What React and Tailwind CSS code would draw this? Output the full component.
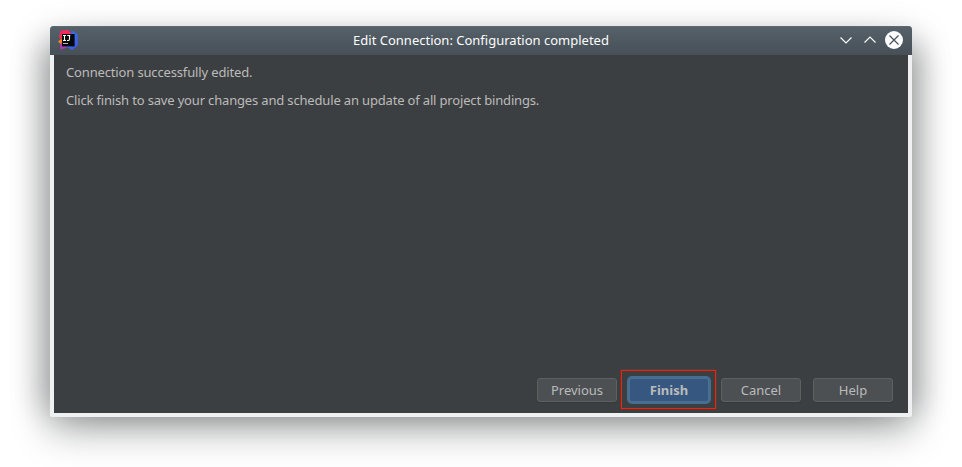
const font = "font-['Noto_Sans',sans-serif]";

function AppLogo() {
  return (
    <svg width="20" height="20" viewBox="0 0 20 20">
      <defs>
        <linearGradient id="pink" x1="0" y1="0" x2="1" y2="1">
          <stop offset="0" stopColor="#f72662" />
          <stop offset="1" stopColor="#f5304f" />
        </linearGradient>
        <linearGradient id="blue" x1="0" y1="0" x2="1" y2="1">
          <stop offset="0" stopColor="#7048d8" />
          <stop offset="0.45" stopColor="#3370f0" />
          <stop offset="1" stopColor="#4a50dc" />
        </linearGradient>
      </defs>
      <path d="M5 7.5 L0 11.5 L3 14.5 L5 14.5 Z" fill="#fa8418" />
      <path d="M2 14 L5 12 L10 17 L2.5 19.7 Z" fill="#b03bb0" />
      <path d="M2.8 0.5 L10 0 L13 3 L13 5 L5 11 L1 7 Z" fill="url(#pink)" />
      <path d="M12 4.5 L14 0.5 L19.8 4.5 L20 15.5 L14 20 L7.5 16 Z" fill="url(#blue)" />
      <rect x="4" y="4" width="12.6" height="12.4" fill="#08090b" />
      <path d="M5 5.5 H8 M6.5 5.5 V10 M5 10.5 H8 M9.2 5.5 H12.3 M11.5 5.5 V9 Q11.5 10.5 10.3 10.5 H9" fill="none" stroke="#ffffff" strokeWidth="1.1" />
      <path d="M5 13.5 H10" stroke="#b8b8b8" strokeWidth="1" />
    </svg>
  );
}

function Button({ children }) {
  return (
    <button className="block h-6 w-20 rounded-[3px] border border-[#5e6162] bg-[#4c5052] text-[13px] leading-[22px] text-[#bbbbbb] shadow-[0_1px_1px_#36393a]">
      {children}
    </button>
  );
}

export default function App() {
  return (
    <div className={`h-[467px] w-[962px] overflow-hidden bg-white px-[50px] pt-[26px] ${font}`}>
      <div className="flex h-[391px] w-[862px] flex-col rounded-t-[4px] rounded-b-[2px] bg-[#eff0f1] shadow-[0_14px_36px_rgba(10,14,16,0.34),-24px_6px_28px_-14px_rgba(10,14,16,0.22),24px_6px_28px_-14px_rgba(10,14,16,0.22)]">
        <header className="flex h-[29px] items-start rounded-t-[4px] bg-linear-to-b from-[#56616a] to-[#475057] pt-1 pr-[9px] pl-2 shadow-[inset_0_1px_0_#5e6a70]">
          <div className="w-[75px]">
            <AppLogo />
          </div>
          <h1 className="flex-1 pt-px text-center text-[13px] leading-[18px] text-[#fcfcfc]">
            Edit Connection: Configuration completed
          </h1>
          <svg width="74" height="20" viewBox="0 0 74 20" fill="none" stroke="#fcfcfc" strokeWidth="1.2">
            <path d="M11.5 7.5 L17 13 L22.5 7.5" />
            <path d="M35.5 12.5 L41 7 L46.5 12.5" />
            <circle cx="65" cy="10" r="9" fill="#fcfcfc" stroke="none" />
            <path d="M60.5 5.5 L69.5 14.5 M69.5 5.5 L60.5 14.5" stroke="#475057" />
          </svg>
        </header>
        <main className="mx-1 mb-1 flex flex-1 flex-col justify-between bg-[#3c3f41] px-3 pt-2 pb-[11px]">
          <div className="flex flex-col gap-[10px] text-[13px] leading-[18px] tracking-[-0.165px] text-[#bbbbbb]">
            <p className="tracking-[-0.15px]">Connection successfully edited.</p>
            <p>Click finish to save your changes and schedule an update of all project bindings.</p>
          </div>
          <footer className="flex justify-end gap-3 pr-[3px]">
            <Button>Previous</Button>
            <div className="relative">
              <button className="block h-6 w-20 rounded-[3px] border border-[#4c708c] bg-[#365880] text-[13px] leading-[22px] font-bold text-[#bbbbbb] shadow-[0_0_0_2px_#466d94]">
                Finish
              </button>
              <span className="pointer-events-none absolute -top-2 -left-2 h-[39px] w-[95px] border border-[#f22208] shadow-[0_0_0_0.5px_#f2220855]" />
            </div>
            <Button>Cancel</Button>
            <Button>Help</Button>
          </footer>
        </main>
      </div>
    </div>
  );
}
